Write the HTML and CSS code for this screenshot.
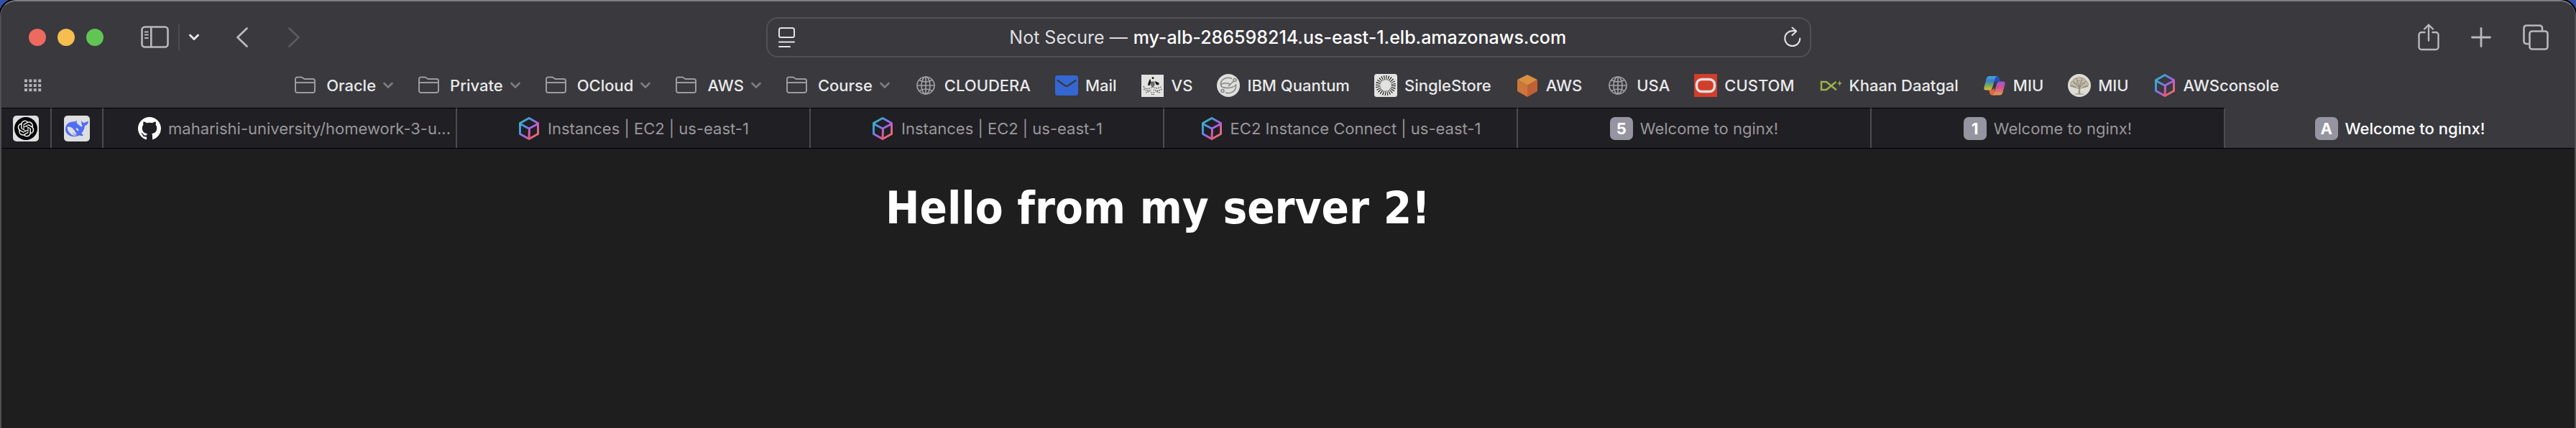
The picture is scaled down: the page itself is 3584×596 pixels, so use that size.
FILE: index.html
```
<!DOCTYPE html>
<html lang="en">
<head>
<meta charset="utf-8">
<title>Welcome to nginx!</title>
<link rel="stylesheet" href="styles.css">
</head>
<body>
<svg class="defs" aria-hidden="true">
  <defs>
    <linearGradient id="cube-blue" x1="0" y1="0" x2="1" y2="1"><stop offset="0" stop-color="#3fb8b4"/><stop offset=".3" stop-color="#4598dd"/><stop offset=".55" stop-color="#a463e8"/><stop offset=".78" stop-color="#e0608e"/><stop offset="1" stop-color="#e8813c"/></linearGradient>
    <linearGradient id="cube-stem" gradientUnits="userSpaceOnUse" x1="0" y1="10" x2="0" y2="30"><stop offset="0" stop-color="#8a6cf0"/><stop offset=".5" stop-color="#c75fc4"/><stop offset="1" stop-color="#ee5a55"/></linearGradient>
    <linearGradient id="cop-left" x1="0" y1="0" x2="0" y2="1"><stop offset="0" stop-color="#41a6dc"/><stop offset=".35" stop-color="#3c7fc9"/><stop offset=".7" stop-color="#7cb05a"/><stop offset="1" stop-color="#e2bb36"/></linearGradient>
    <linearGradient id="cop-right" x1="0" y1="0" x2="0" y2="1"><stop offset="0" stop-color="#9a56d6"/><stop offset=".5" stop-color="#d9548a"/><stop offset="1" stop-color="#e2a04e"/></linearGradient>
    <symbol id="folder" viewBox="0 0 32 32"><path d="M2 8.500V23.500A2.500 2.500 0 0 0 4.500 26H26.500A2.500 2.500 0 0 0 29 23.500V9.500A2.500 2.500 0 0 0 26.500 7H14.500L11.500 5A3 3 0 0 0 10 4.500H4.500A2.500 2.500 0 0 0 2 7ZM2 12H29" fill="none" stroke="#9c9ca0" stroke-width="2"/></symbol>
    <symbol id="down" viewBox="0 0 14 10"><path d="M1.500 2 7 7.500 12.500 2" fill="none" stroke="#7e7e82" stroke-width="2.600" stroke-linecap="round" stroke-linejoin="round"/></symbol>
    <symbol id="globe" viewBox="0 0 32 32"><g fill="none" stroke="#a0a0a4" stroke-width="1.700"><circle cx="16" cy="16" r="12"/><ellipse cx="16" cy="16" rx="6" ry="12"/><path d="M16 4V28M4 16H28M7 8.500Q16 13.500 25 8.500M7 23.500Q16 18.500 25 23.500"/></g></symbol>
    <symbol id="cube" viewBox="0 0 32 32"><g fill="none" stroke-width="3" stroke-linejoin="round"><path d="M16 1.500 28.500 8.500V23.500L16 30.500 3.500 23.500V8.500ZM3.500 9.500 16 16 28.500 9.500" stroke="url(#cube-blue)"/><path d="M16.500 16 16 30.500" stroke="url(#cube-stem)"/></g></symbol>
  </defs>
</svg>

<div class="window">
  <header class="chrome">
    <div class="toolbar">
      <div class="tools-left">
        <div class="lights">
          <button class="light close" aria-label="Close"></button>
          <button class="light minimize" aria-label="Minimize"></button>
          <button class="light full" aria-label="Full screen"></button>
        </div>
        <button class="tool sidebar" aria-label="Show sidebar"><svg width="40" height="32" viewBox="0 0 40 32"><g fill="none" stroke="#b9b9bc" stroke-width="2.600" stroke-linecap="round"><rect x="1.500" y="1.500" width="36" height="28" rx="4"/><path d="M14.300 2V29"/><path d="M5.800 8.500H9.800M5.800 12.500H9.800M5.800 17H9.800" stroke-width="2"/></g></svg></button>
        <span class="rule"></span>
        <button class="tool groups" aria-label="Tab groups"><svg width="14" height="10" viewBox="0 0 14 10"><path d="M1.500 2 7 7.500 12.500 2" fill="none" stroke="#e6e6e8" stroke-width="3" stroke-linecap="round" stroke-linejoin="round"/></svg></button>
        <button class="tool back" aria-label="Back"><svg width="18" height="30" viewBox="0 0 18 30"><path d="M15.500 2.500 2.500 15 15.500 27.500" fill="none" stroke="#b9b9bc" stroke-width="2.800" stroke-linecap="round" stroke-linejoin="round"/></svg></button>
        <button class="tool forward" aria-label="Forward" disabled><svg width="18" height="30" viewBox="0 0 18 30"><path d="M2.500 2.500 15.500 15 2.500 27.500" fill="none" stroke="#5b5b5f" stroke-width="2.800" stroke-linecap="round" stroke-linejoin="round"/></svg></button>
      </div>
      <div class="address">
        <button class="tool" aria-label="Page menu"><svg width="24" height="30" viewBox="0 0 24 30"><g fill="none" stroke="#e4e4e5" stroke-width="2" stroke-linecap="round"><rect x="1" y="2" width="21" height="13" rx="2.500"/><path d="M1 21.500H22M1 28H16"/></g></svg></button>
        <div class="location">
          <label class="security" for="url">Not Secure —</label>
          <input class="url" id="url" type="text" value="my-alb-286598214.us-east-1.elb.amazonaws.com">
        </div>
        <button class="tool" aria-label="Reload"><svg width="24" height="30" viewBox="0 0 24 30"><path d="M22.300 16.500A10.500 10.500 0 1 1 11.800 6H17M11.500 1.500 17.300 6.500 11.500 12" fill="none" stroke="#e4e4e5" stroke-width="2" stroke-linecap="round" stroke-linejoin="round"/></svg></button>
      </div>
      <div class="tools-right">
        <button class="tool" aria-label="Share"><svg width="30" height="40" viewBox="0 0 30 40"><g fill="none" stroke="#b9b9bc" stroke-width="2.400" stroke-linecap="round" stroke-linejoin="round"><path d="M9.500 13H5A3.500 3.500 0 0 0 1.500 16.500V33.500A3.500 3.500 0 0 0 5 37H25A3.500 3.500 0 0 0 28.500 33.500V16.500A3.500 3.500 0 0 0 25 13H20.500M15 24.500V2.500M9 8.500 15 2.500 21 8.500"/></g></svg></button>
        <button class="tool" aria-label="New tab"><svg width="28" height="28" viewBox="0 0 28 28"><path d="M14 1.500V26.500M1.500 14H26.500" stroke="#b9b9bc" stroke-width="2.800" stroke-linecap="round"/></svg></button>
        <button class="tool" aria-label="Tab overview"><svg width="36" height="36" viewBox="0 0 36 36"><g fill="none" stroke="#b9b9bc" stroke-width="2.600"><rect x="9.500" y="9.500" width="25" height="25" rx="3.500"/><path d="M9 27H5A3.500 3.500 0 0 1 1.500 23.500V5A3.500 3.500 0 0 1 5 1.500H23.500A3.500 3.500 0 0 1 27 5V9"/></g></svg></button>
      </div>
    </div>

    <nav class="favorites" aria-label="Favorites">
      <button class="tool grid" aria-label="Favorites grid"><svg width="24" height="18" viewBox="0 0 24 18"><g fill="#b4b4b7"><path id="dots" d="M0 .500h4v4H0zM6.400.500h4v4h-4zM12.800.500h4v4h-4zM19.200.500h4v4h-4z"/><use href="#dots" y="6.400"/><use href="#dots" y="12.800"/></g></svg></button>
      <div class="marks">
        <button class="mark menu"><svg class="icon"><use href="#folder"/></svg>Oracle<svg class="down"><use href="#down"/></svg></button>
        <button class="mark menu"><svg class="icon"><use href="#folder"/></svg>Private<svg class="down"><use href="#down"/></svg></button>
        <button class="mark menu"><svg class="icon"><use href="#folder"/></svg>OCloud<svg class="down"><use href="#down"/></svg></button>
        <button class="mark menu"><svg class="icon"><use href="#folder"/></svg>AWS<svg class="down"><use href="#down"/></svg></button>
        <button class="mark menu"><svg class="icon"><use href="#folder"/></svg>Course<svg class="down"><use href="#down"/></svg></button>
        <a class="mark" href="#"><svg class="icon"><use href="#globe"/></svg>CLOUDERA</a>
        <a class="mark" href="#"><svg class="icon" viewBox="0 0 32 32"><rect y="2" width="32" height="28" rx="3.500" fill="#3567d3"/><path d="M3.500 9 13.500 16Q16 17.600 18.500 16L28.500 9" fill="none" stroke="#39393e" stroke-width="2.300" stroke-linecap="round"/></svg>Mail</a>
        <a class="mark" href="#"><svg class="icon" viewBox="0 0 32 32"><rect y="1" width="31" height="31" fill="#e2e2e0"/><g fill="#161616"><path d="M14.500 5 16 4 17.500 5 17 7H15ZM11 9 12 7 12.800 8 13.300 12 11.500 16 9 16 9.700 12ZM19 10 21.500 11 24.500 12.500 24.500 15 22 15.500 20 14Z"/><path d="M13 10.500H18.500V16L15.800 18.500 13 16Z" fill="#6a6a68"/></g><g fill="none" stroke="#4a4a48" stroke-width="1.200" stroke-dasharray="1.600 1.200"><path d="M3 17Q5 22 11 20T16 18Q22 22 28.500 17M3 21Q9 25 14 22M28.500 21Q22 25 17 22M6 26 12 24M26 26 20 24M13 26H19M14 28.500H18"/></g></svg>VS</a>
        <a class="mark" href="#"><svg class="icon" viewBox="0 0 32 32"><circle cx="16" cy="16" r="16" fill="#dededd"/><g fill="none" stroke="#858585" stroke-width="1.500"><path d="M21 6.500C12 2.500 4.500 9 5.500 15.500 6.500 20.500 21 21 26.500 15.500M5.500 15.500C8 11.500 16 12.500 19 14.500M26.500 14V19C24.500 25.500 17.500 28 12 26M16 17 23.500 10"/><circle cx="25" cy="8.500" r="2"/><circle cx="8" cy="23.500" r="2"/></g></svg>IBM Quantum</a>
        <a class="mark" href="#"><svg class="icon" viewBox="0 0 32 32"><rect width="32" height="32" rx="3.500" fill="#e2e2e1"/><circle cx="16" cy="16" r="10.800" fill="none" stroke="#161616" stroke-width="6.500" stroke-dasharray="1 1.827"/></svg>SingleStore</a>
        <a class="mark" href="#"><svg class="icon" viewBox="0 0 32 32"><path d="M16 1 30 8 16 16 2 8Z" fill="#d98f40"/><path d="M2 8 16 16V32L2 24Z" fill="#cc763a"/><path d="M30 8 16 16V32L30 24Z" fill="#c16034"/></svg>AWS</a>
        <a class="mark" href="#"><svg class="icon"><use href="#globe"/></svg>USA</a>
        <a class="mark" href="#"><svg class="icon" viewBox="0 0 32 32"><rect width="32" height="32" fill="#d23e29"/><rect x="3.500" y="7.500" width="25" height="17" rx="7" fill="none" stroke="#e0e0e4" stroke-width="3.400"/></svg>CUSTOM</a>
        <a class="mark" href="#"><svg class="icon" viewBox="0 0 32 32"><path d="M3 11H10L24 22.300M23.500 11 10 22H3V9.800" fill="none" stroke="#9cb148" stroke-width="2.500"/><path d="M28.500 9 29.500 12 32 13 29.500 14 28.500 17 27.500 14 25 13 27.500 12Z" fill="#9cb148"/></svg>Khaan Daatgal</a>
        <a class="mark" href="#"><svg class="icon" viewBox="0 0 32 32"><path d="M15 3H19.500Q22 3 22.800 6L24 10.500H20Q17.500 10.500 16.500 13.500Z" fill="#2450bd"/><path d="M17 29.500H12.500Q10 29.500 9.200 26.500L8 22H12Q14.500 22 15.500 19Z" fill="#dc6a3e"/><path d="M9 3H20Q17.500 3.500 16.500 7L13 19Q12 22.500 9 22.500H4Q.500 22.500 1.500 18.500L4.500 7Q5.500 3 9 3Z" fill="url(#cop-left)"/><path d="M23 29.500H12.500Q15 29 16 25.500L19 14Q20 10.500 23 10.500H27.500Q31.500 10.500 30.500 14L27.500 25.500Q26.500 29.500 23 29.500Z" fill="url(#cop-right)"/></svg>MIU</a>
        <a class="mark" href="#"><svg class="icon" viewBox="0 0 32 32"><circle cx="16" cy="16" r="16" fill="#dedcd5"/><path d="M14.500 28Q15.500 22 14.500 17.500L17.500 17.500Q16.500 22 17.500 28Z" fill="#9c9682"/><path d="M4.500 17Q2.500 12 7 9.500 9 5 13.500 5.500 16 3 18.500 5.500 23 5 25 9.500 29.500 12 27.500 17 24 19.500 21 17.500 16 19 11 17.500 8 19.500 4.500 17Z" fill="#c3beac"/><g fill="none" stroke="#938d79" stroke-width="1.200"><path d="M16 19 7 10M16 18 12 6M16 18 20 6M16 19 25 10M15.500 20Q9 19 5 15.500M16.500 20Q23 19 27 15.500M10 28H22"/><path d="M4 17Q2.500 12 7 9.500 9 5 13.500 5.500 16 3 18.500 5.500 23 5 25 9.500 29.500 12 28 17 24 19.500 21 17.500M4 17Q8 19.500 11 17.500M8 13H13M19 13H24M12 9.500H20" stroke-dasharray="2 1"/></g></svg>MIU</a>
        <a class="mark" href="#"><svg class="icon"><use href="#cube"/></svg>AWSconsole</a>
      </div>
    </nav>
  </header>

  <nav class="tabs" aria-label="Tabs">
    <button class="tab pinned" aria-label="ChatGPT"><svg width="36" height="36" viewBox="0 0 36 36"><rect width="36" height="36" rx="5" fill="#dedede"/><circle cx="18" cy="18" r="16" fill="#000"/><path transform="translate(6.600 6.600) scale(.95)" fill="#f2f2f2" d="M22.2819 9.8211a5.9847 5.9847 0 0 0-.5157-4.9108 6.0462 6.0462 0 0 0-6.5098-2.9A6.0651 6.0651 0 0 0 4.9807 4.1818a5.9847 5.9847 0 0 0-3.9977 2.9 6.0462 6.0462 0 0 0 .7427 7.0966 5.98 5.98 0 0 0 .511 4.9107 6.051 6.051 0 0 0 6.5146 2.9001A5.9847 5.9847 0 0 0 13.2599 24a6.0557 6.0557 0 0 0 5.7718-4.2058 5.9894 5.9894 0 0 0 3.9977-2.9001 6.0557 6.0557 0 0 0-.7475-7.0729zm-9.022 12.6081a4.4755 4.4755 0 0 1-2.8764-1.0408l.1419-.0804 4.7783-2.7582a.7948.7948 0 0 0 .3927-.6813v-6.7369l2.02 1.1686a.071.071 0 0 1 .038.052v5.5826a4.504 4.504 0 0 1-4.4945 4.4944zm-9.6607-4.1254a4.4708 4.4708 0 0 1-.5346-3.0137l.142.0852 4.783 2.7582a.7712.7712 0 0 0 .7806 0l5.8428-3.3685v2.3324a.0804.0804 0 0 1-.0332.0615L9.74 19.9502a4.4992 4.4992 0 0 1-6.1408-1.6464zM2.3408 7.8956a4.485 4.485 0 0 1 2.3655-1.9728V11.6a.7664.7664 0 0 0 .3879.6765l5.8144 3.3543-2.0201 1.1685a.0757.0757 0 0 1-.071 0l-4.8303-2.7865A4.504 4.504 0 0 1 2.3408 7.872zm16.5963 3.8558L13.1038 8.364 15.1192 7.2a.0757.0757 0 0 1 .071 0l4.8303 2.7913a4.4944 4.4944 0 0 1-.6765 8.1042v-5.6772a.79.79 0 0 0-.407-.667zm2.0107-3.0231l-.142-.0852-4.7735-2.7818a.7759.7759 0 0 0-.7854 0L9.409 9.2297V6.8974a.0662.0662 0 0 1 .0284-.0615l4.8303-2.7866a4.4992 4.4992 0 0 1 6.6802 4.66zM8.3065 12.863l-2.02-1.1638a.0804.0804 0 0 1-.038-.0567V6.0742a4.4992 4.4992 0 0 1 7.3757-3.4537l-.142.0805L8.704 5.459a.7948.7948 0 0 0-.3927.6813zm1.0976-2.3654l2.602-1.4998 2.6069 1.4998v2.9994l-2.5974 1.4997-2.6067-1.4997Z"/></svg></button>
    <button class="tab pinned" aria-label="DeepSeek"><svg width="36" height="36" viewBox="0 0 36 36"><rect width="36" height="36" rx="5" fill="#dedede"/><path d="M2 19C2 12.500 7 8.500 12.500 8.500L16 8Q16.500 7 18 7L17.500 10C20.500 12.500 22.500 15.500 25.500 15.500 26 14 23.500 11.500 24.500 7 25.500 9.500 27 10 28.500 10 30 8.500 32 9 34 7.500 34 11.500 31.500 13.500 29 14 28.500 19 26.500 22 24.500 24.500L27 27.500Q24.500 29 21.500 27.500C12 32 2 27 2 19Z" fill="#4f6df5"/><path d="M4.500 16C10 13.500 15 20 18 26.500 15 26.500 13.500 25 12 23.500 13 26 15.500 27.500 18 28 12 29 5 24 4.500 16Z" fill="#dedede"/><path d="M16.500 17.500Q19 16 20.500 20.500 19 22 17.500 20Z" fill="#dedede"/></svg></button>
    <button class="tab long"><svg class="icon" viewBox="0 0 16 16"><path fill="#fff" d="M8 0C3.58 0 0 3.58 0 8c0 3.54 2.29 6.53 5.47 7.59.4.07.55-.17.55-.38 0-.19-.01-.82-.01-1.49-2.01.37-2.53-.49-2.69-.94-.09-.23-.48-.94-.82-1.13-.28-.15-.68-.52-.01-.53.63-.01 1.08.58 1.23.82.72 1.21 1.87.87 2.33.66.07-.52.28-.87.51-1.07-1.78-.2-3.64-.89-3.64-3.95 0-.87.31-1.59.82-2.15-.08-.2-.36-1.02.08-2.12 0 0 .67-.21 2.2.82.64-.18 1.32-.27 2-.27s1.36.09 2 .27c1.53-1.04 2.2-.82 2.2-.82.44 1.1.16 1.92.08 2.12.51.56.82 1.27.82 2.15 0 3.07-1.87 3.75-3.65 3.95.29.25.54.73.54 1.48 0 1.07-.01 1.93-.01 2.2 0 .21.15.46.55.38A8.01 8.01 0 0 0 16 8c0-4.42-3.58-8-8-8Z"/></svg><span>maharishi-university/homework-3-u...</span></button>
    <button class="tab"><svg class="icon"><use href="#cube"/></svg><span>Instances | EC2 | us-east-1</span></button>
    <button class="tab"><svg class="icon"><use href="#cube"/></svg><span>Instances | EC2 | us-east-1</span></button>
    <button class="tab"><svg class="icon"><use href="#cube"/></svg><span>EC2 Instance Connect | us-east-1</span></button>
    <button class="tab"><span class="letter">5</span><span>Welcome to nginx!</span></button>
    <button class="tab"><span class="letter">1</span><span>Welcome to nginx!</span></button>
    <button class="tab active" aria-current="page"><span class="letter">A</span><span>Welcome to nginx!</span></button>
  </nav>

  <main class="page">
    <div class="content">
      <h1>Hello from my server 2!</h1>
    </div>
  </main>
</div>
</body>
</html>
```
FILE: styles.css
```
* {
  box-sizing: border-box;
}

body {
  margin: 0;
  background: #3550a8;
  font-family: Inter, "Liberation Sans", sans-serif;
}

.defs {
  position: absolute;
  width: 0;
  height: 0;
}

button {
  margin: 0;
  padding: 0;
  border: 0;
  background: none;
  color: inherit;
  font: inherit;
}

.window {
  display: flex;
  flex-direction: column;
  min-height: 100vh;
  overflow: hidden;
  border: 2px solid #505052;
  border-top-color: #7b7c80;
  border-bottom: 0;
  border-radius: 22px 22px 0 0;
  background: #1e1e1e;
  box-shadow: 0 0 0 2px #000;
}

.chrome {
  background: #39393e;
}

.toolbar {
  display: grid;
  grid-template-columns: 1fr 41.5% 1fr;
  align-items: center;
  height: 100px;
  padding: 0 36px 0 38px;
}

.tools-left,
.tools-right,
.lights,
.address,
.location,
.marks,
.mark,
.tab {
  display: flex;
  align-items: center;
}

.tool {
  display: flex;
  flex: none;
}

.lights {
  gap: 16px;
}

.light {
  width: 24px;
  height: 24px;
  border-radius: 50%;
}

.close {
  background: #ed6a5e;
}

.minimize {
  background: #f5be4f;
}

.full {
  background: #61c554;
}

.sidebar {
  margin-left: 52px;
}

.rule {
  width: 2px;
  height: 36px;
  margin: 0 13px 0 12px;
  background: #4d4d51;
}

.back {
  margin-left: 51px;
}

.forward {
  margin-left: 54px;
}

.address {
  height: 56px;
  padding: 0 12px 0 15px;
  border: 2px solid #505055;
  border-radius: 16px;
  font-size: 25px;
}

.location {
  flex: 1;
  justify-content: center;
  gap: 8px;
}

.security {
  color: #dedee0;
}

.url {
  width: 608px;
  padding: 0;
  border: 0;
  outline: 0;
  background: none;
  color: #fff;
  font: 500 25px Inter, "Liberation Sans", sans-serif;
}

.tools-right {
  justify-content: flex-end;
  gap: 44px;
}

.favorites {
  display: grid;
  grid-template-columns: 1fr auto 1fr;
  align-items: center;
  height: 48px;
  padding: 0 36px 14px 32px;
}

.marks {
  gap: 34px;
}

.mark {
  gap: 10px;
  color: #e9e9ea;
  font-size: 22px;
  font-weight: 500;
  line-height: 32px;
  text-decoration: none;
  white-space: nowrap;
}

.menu .icon {
  margin-right: 3px;
}

.icon {
  flex: none;
  width: 32px;
  height: 32px;
}

.down {
  width: 14px;
  height: 10px;
}

.tabs {
  display: grid;
  grid-template-columns: 70px 72px repeat(6, minmax(0, 82fr)) minmax(0, 81fr);
  height: 57px;
  border-bottom: 1px solid #000;
  background: #39393e;
}

.tab {
  justify-content: center;
  gap: 10px;
  border-top: 1px solid #000;
  border-right: 2px solid #4c4b50;
  background: #201f23;
  color: #98979b;
  font-size: 22px;
  white-space: nowrap;
}

.long {
  justify-content: flex-start;
  padding-left: 48px;
}

.active {
  border-top-color: transparent;
  border-right: 0;
  background: #39393e;
  color: #fff;
  font-weight: 500;
}

.letter {
  flex: none;
  width: 32px;
  border-radius: 7px;
  background: #9595a1;
  color: #fff;
  font-weight: 700;
  line-height: 32px;
  text-align: center;
}

.page {
  flex: 1;
}

.content {
  width: 1120px;
  max-width: 100%;
  margin: 0 auto;
}

h1 {
  margin: 44px 0;
  color: #fff;
  font: 700 63px/77px "DejaVu Sans Condensed", "DejaVu Sans", sans-serif;
}
```
